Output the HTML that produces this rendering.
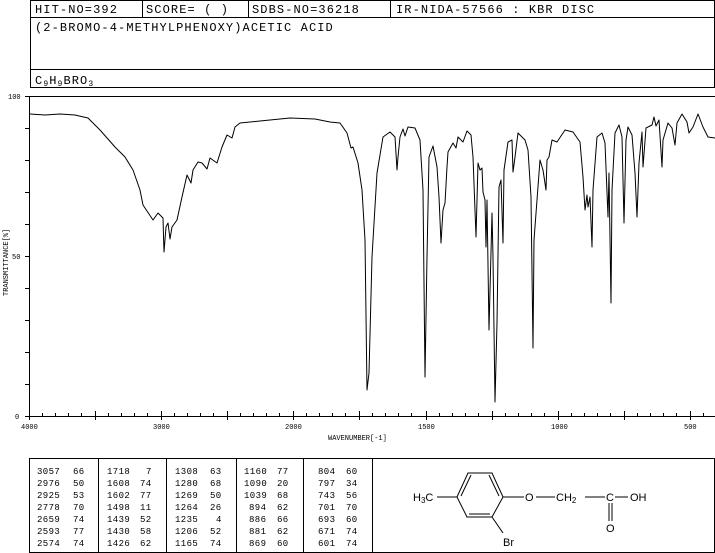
<!DOCTYPE html>
<html><head><meta charset="utf-8"><style>
body{margin:0;background:#fff;width:715px;height:553px;overflow:hidden}
svg{display:block}
text{font-family:"Liberation Mono",monospace;fill:#000}
</style></head><body>
<svg width="715" height="553" viewBox="0 0 715 553" xmlns="http://www.w3.org/2000/svg">
<g fill="none" stroke="#000" stroke-width="1">
<rect x="30.5" y="0.5" width="684" height="87"/>
<line x1="30" y1="17.5" x2="715" y2="17.5"/>
<line x1="142.5" y1="0" x2="142.5" y2="17"/>
<line x1="248.5" y1="0" x2="248.5" y2="17"/>
<line x1="390.5" y1="0" x2="390.5" y2="17"/>
<line x1="30" y1="69.5" x2="715" y2="69.5"/>
</g>
<g font-size="12" letter-spacing="1.1">
<text x="35" y="13">HIT-NO=392</text>
<text x="146" y="13">SCORE=  (   )</text>
<text x="252" y="13">SDBS-NO=36218</text>
<text x="396" y="13">IR-NIDA-57566 : KBR DISC</text>
<text x="35" y="31">(2-BROMO-4-METHYLPHENOXY)ACETIC ACID</text>
<text x="35" y="84">C<tspan font-size="8" dy="2">9</tspan><tspan dy="-2">H</tspan><tspan font-size="8" dy="2">9</tspan><tspan dy="-2">BRO</tspan><tspan font-size="8" dy="2">3</tspan></text>
</g>
<g stroke="#000" stroke-width="1" fill="none">
<line x1="29.5" y1="96" x2="29.5" y2="417"/>
<line x1="29" y1="96.5" x2="715" y2="96.5"/>
<line x1="29" y1="416.5" x2="715" y2="416.5"/>
<path d="M25 96.5h4M25 128.5h4M25 160.5h4M25 192.5h4M25 224.5h4M25 256.5h4M25 288.5h4M25 320.5h4M25 352.5h4M25 384.5h4M25 416.5h4"/>
<path d="M42.5 413v3M55.5 413v3M68.5 413v3M81.5 413v3M108.5 413v3M121.5 413v3M134.5 413v3M147.5 413v3M174.5 413v3M187.5 413v3M200.5 413v3M213.5 413v3M240.5 413v3M253.5 413v3M266.5 413v3M279.5 413v3M306.5 413v3M319.5 413v3M332.5 413v3M345.5 413v3M372.5 413v3M385.5 413v3M398.5 413v3M411.5 413v3M439.5 413v3M452.5 413v3M465.5 413v3M478.5 413v3M505.5 413v3M518.5 413v3M531.5 413v3M544.5 413v3M571.5 413v3M584.5 413v3M597.5 413v3M610.5 413v3M637.5 413v3M650.5 413v3M663.5 413v3M676.5 413v3M703.5 413v3"/>
<path d="M29.5 411v9M95.5 411v9M161.5 411v9M227.5 411v9M293.5 411v9M359.5 411v9M426.5 411v9M492.5 411v9M558.5 411v9M624.5 411v9M690.5 411v9"/>
<polyline stroke-linejoin="round" points="30,114 45,115 60,114 75,115 88,118 100,130 115,147 125,157 133,170 140,190 143,205 153,220 158,213 163,218 164,252 166,227 168,223 170,239 172,227 177,220 182,197 187,175 191,183 193,170 198,162 202,163 207,169 210,158 217,163 222,147 227,135 232,138 235,127 240,123 260,121 290,118 315,119 330,122 340,123 347,133 351,148 353,147 358,163 362,190 365,240 367,390 369,373 372,257 377,173 383,137 390,132 395,137 397,170 398,157 400,137 403,129 405,136 408,127 415,128 420,140 423,190 425,377 427,257 429,157 433,146 437,167 439,197 441,243 443,210 445,203 447,167 448,152 453,143 456,148 458,137 463,142 467,131 471,135 473,157 476,237 478,163 480,170 482,168 483,192 485,200 486,247 487,200 489,330 492,213 493,257 495,402 497,323 499,187 501,180 503,243 504,170 508,142 512,140 513,172 515,157 518,133 525,140 528,150 531,197 533,348 534,240 537,200 540,160 543,170 546,190 547,160 549,157 552,140 557,142 565,130 573,132 580,142 583,177 585,210 587,195 588,207 590,197 592,247 593,190 597,137 602,133 605,143 608,217 609,173 611,303 612,190 615,133 619,125 622,137 624,223 626,140 628,127 632,135 635,173 637,217 639,163 642,132 643,167 646,128 652,125 654,117 656,126 659,120 662,167 663,140 668,123 672,128 675,145 677,123 682,114 687,122 689,133 693,127 698,114 703,127 708,137 715,138"/>
</g>
<g font-size="7">
<text x="8" y="99">100</text>
<text x="12" y="259">50</text>
<text x="15" y="419">0</text>
<text x="21" y="429">4000</text>
<text x="153" y="429">3000</text>
<text x="285" y="429">2000</text>
<text x="418" y="429">1500</text>
<text x="551" y="429">1000</text>
<text x="684" y="429">500</text>
<text x="328" y="440">WAVENUMBER[-1]</text>
<text transform="translate(8,296) rotate(-90)">TRANSMITTANCE[%]</text>
</g>
<g fill="none" stroke="#000" stroke-width="1">
<rect x="29.5" y="458.5" width="685" height="94"/>
<line x1="98.5" y1="458" x2="98.5" y2="553"/>
<line x1="166.5" y1="458" x2="166.5" y2="553"/>
<line x1="236.5" y1="458" x2="236.5" y2="553"/>
<line x1="303.5" y1="458" x2="303.5" y2="553"/>
<line x1="372.5" y1="458" x2="372.5" y2="553"/>
</g>
<g font-size="9" letter-spacing="0.4">
<text x="37" y="474">3057</text><text x="73" y="474">66</text>
<text x="37" y="486">2976</text><text x="73" y="486">50</text>
<text x="37" y="498">2925</text><text x="73" y="498">53</text>
<text x="37" y="510">2778</text><text x="73" y="510">70</text>
<text x="37" y="522">2659</text><text x="73" y="522">74</text>
<text x="37" y="534">2593</text><text x="73" y="534">77</text>
<text x="37" y="546">2574</text><text x="73" y="546">74</text>
<text x="107" y="474">1718</text><text x="146" y="474">7</text>
<text x="107" y="486">1608</text><text x="140" y="486">74</text>
<text x="107" y="498">1602</text><text x="140" y="498">77</text>
<text x="107" y="510">1498</text><text x="140" y="510">11</text>
<text x="107" y="522">1439</text><text x="140" y="522">52</text>
<text x="107" y="534">1430</text><text x="140" y="534">58</text>
<text x="107" y="546">1426</text><text x="140" y="546">62</text>
<text x="175" y="474">1308</text><text x="210" y="474">63</text>
<text x="175" y="486">1280</text><text x="210" y="486">68</text>
<text x="175" y="498">1269</text><text x="210" y="498">50</text>
<text x="175" y="510">1264</text><text x="210" y="510">26</text>
<text x="175" y="522">1235</text><text x="216" y="522">4</text>
<text x="175" y="534">1206</text><text x="210" y="534">52</text>
<text x="175" y="546">1165</text><text x="210" y="546">74</text>
<text x="244" y="474">1160</text><text x="277" y="474">77</text>
<text x="244" y="486">1090</text><text x="277" y="486">20</text>
<text x="244" y="498">1039</text><text x="277" y="498">68</text>
<text x="249" y="510">894</text><text x="277" y="510">62</text>
<text x="249" y="522">886</text><text x="277" y="522">66</text>
<text x="249" y="534">881</text><text x="277" y="534">62</text>
<text x="249" y="546">869</text><text x="277" y="546">60</text>
<text x="318" y="474">804</text><text x="346" y="474">60</text>
<text x="318" y="486">797</text><text x="346" y="486">34</text>
<text x="318" y="498">743</text><text x="346" y="498">56</text>
<text x="318" y="510">701</text><text x="346" y="510">70</text>
<text x="318" y="522">693</text><text x="346" y="522">60</text>
<text x="318" y="534">671</text><text x="346" y="534">74</text>
<text x="318" y="546">601</text><text x="346" y="546">74</text>
</g>
<g fill="none" stroke="#000" stroke-width="1">
<polygon points="457,497 468,473 492,473 503,497 492,517 467,517"/>
<line x1="471" y1="475" x2="461" y2="496"/>
<line x1="489" y1="475" x2="499" y2="496"/>
<line x1="469" y1="514" x2="490" y2="514"/>
<line x1="437" y1="497" x2="457" y2="497"/>
<line x1="503" y1="497" x2="524" y2="497"/>
<line x1="536" y1="497" x2="555" y2="497"/>
<line x1="585" y1="497" x2="605" y2="497"/>
<line x1="615" y1="497" x2="628" y2="497"/>
<line x1="492" y1="517" x2="503" y2="533"/>
<line x1="609" y1="503" x2="609" y2="521"/>
<line x1="612" y1="503" x2="612" y2="521"/>
</g>
<g font-family="Liberation Sans,sans-serif" font-size="11">
<text x="413" y="501" style="font-family:'Liberation Sans',sans-serif">H<tspan font-size="8" dy="2">3</tspan><tspan dy="-2">C</tspan></text>
<text x="525" y="501" style="font-family:'Liberation Sans',sans-serif">O</text>
<text x="556" y="501" style="font-family:'Liberation Sans',sans-serif">CH<tspan font-size="8" dy="2">2</tspan></text>
<text x="606" y="501" style="font-family:'Liberation Sans',sans-serif">C</text>
<text x="630" y="501" style="font-family:'Liberation Sans',sans-serif">OH</text>
<text x="606" y="532" style="font-family:'Liberation Sans',sans-serif">O</text>
<text x="503" y="546" style="font-family:'Liberation Sans',sans-serif">Br</text>
</g>
</svg>
</body></html>
